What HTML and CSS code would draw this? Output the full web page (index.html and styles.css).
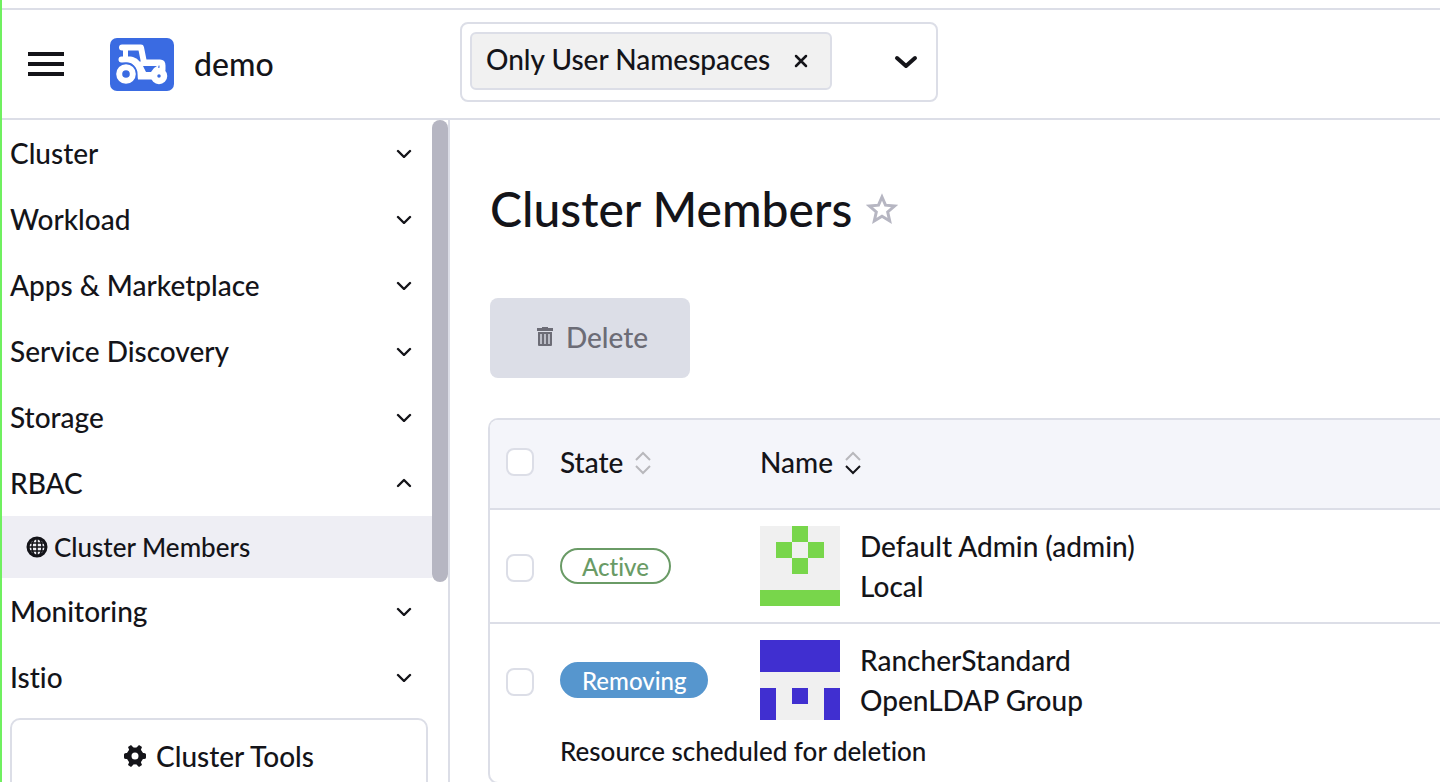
FILE: index.html
```html
<!DOCTYPE html>
<html lang="en">
<head>
    <meta charset="UTF-8">
    <meta name="viewport" content="width=device-width, initial-scale=1.0">
    <title>demo - Cluster Members</title>
    <link rel="stylesheet" href="styles.css">
</head>
<body>
    <!-- Shared icons -->
    <svg class="sprite" aria-hidden="true">
        <symbol id="chevron-down" viewBox="0 0 16 10">
            <path d="M2 3l6 6 6-6" fill="none" stroke="currentColor" stroke-width="2.400" stroke-linecap="round" stroke-linejoin="round"/>
        </symbol>
        <symbol id="chevron-up" viewBox="0 0 16 10">
            <path d="M2 8l6-6 6 6" fill="none" stroke="currentColor" stroke-width="2.400" stroke-linecap="round" stroke-linejoin="round"/>
        </symbol>
    </svg>

    <header class="header">
        <button class="menu-btn" type="button" aria-label="Menu">
            <svg width="36" height="24" viewBox="0 0 36 24"><path d="M0 0h36v4H0zM0 10h36v4H0zM0 20h36v4H0z" fill="currentColor"/></svg>
        </button>
        <a class="brand" href="#">
            <svg class="logo" width="64" height="53" viewBox="0 0 64 53" aria-hidden="true">
                <rect width="64" height="53" rx="7" fill="#3a6be2"/>
                <path d="M12 9.500h19l3 15h16q2.500 0 2.500 3v4" fill="none" stroke="#fff" stroke-width="6" stroke-linecap="round" stroke-linejoin="round"/>
                <path d="M13 10h5v10h-5z" fill="#fff"/>
                <path d="M11.500 18.500h7c5 0 9 2 11 5h20l-4 18H28c-1-11-4-17-11-17h-5.500a3 3 0 0 1 0-6z" fill="#fff"/>
                <path d="M33 28h14l-3 2-3 4h-5z" fill="#3a6be2"/>
                <circle cx="16" cy="36" r="11.500" fill="#3a6be2"/>
                <circle cx="16" cy="36" r="6.800" fill="none" stroke="#fff" stroke-width="6"/>
                <circle cx="49" cy="38" r="5" fill="none" stroke="#fff" stroke-width="6.500"/>
            </svg>
            <span>demo</span>
        </a>
        <div class="ns-filter">
            <div class="ns-tag">
                <span>Only User Namespaces</span>
                <button type="button" aria-label="Remove">
                    <svg width="14" height="14" viewBox="0 0 14 14"><path d="M2 2l10 10M12 2L2 12" stroke="currentColor" stroke-width="2.500" stroke-linecap="round"/></svg>
                </button>
            </div>
            <button class="ns-toggle" type="button" aria-label="Select namespaces">
                <svg width="24" height="14" viewBox="0 0 24 14"><path d="M3 3l9 8 9-8" fill="none" stroke="currentColor" stroke-width="4" stroke-linecap="round" stroke-linejoin="round"/></svg>
            </button>
        </div>
    </header>

    <div class="layout">
        <div class="sidebar">
            <nav class="nav">
                <button class="nav-group" type="button">Cluster <svg class="chevron"><use href="#chevron-down"/></svg></button>
                <button class="nav-group" type="button">Workload <svg class="chevron"><use href="#chevron-down"/></svg></button>
                <button class="nav-group" type="button">Apps &amp; Marketplace <svg class="chevron"><use href="#chevron-down"/></svg></button>
                <button class="nav-group" type="button">Service Discovery <svg class="chevron"><use href="#chevron-down"/></svg></button>
                <button class="nav-group" type="button">Storage <svg class="chevron"><use href="#chevron-down"/></svg></button>
                <button class="nav-group" type="button" aria-expanded="true">RBAC <svg class="chevron"><use href="#chevron-up"/></svg></button>
                <a class="nav-item" href="#">
                    <svg width="22" height="22" viewBox="0 0 22 22" fill="none" stroke="currentColor" aria-hidden="true">
                        <circle cx="11" cy="11" r="9" stroke-width="3"/>
                        <ellipse cx="11" cy="11" rx="5" ry="9" stroke-width="1.600"/>
                        <path d="M11 2v18M2 11h18M3 7h16M3 15h16" stroke-width="1.600"/>
                    </svg>
                    Cluster Members
                </a>
                <button class="nav-group" type="button">Monitoring <svg class="chevron"><use href="#chevron-down"/></svg></button>
                <button class="nav-group" type="button">Istio <svg class="chevron"><use href="#chevron-down"/></svg></button>
                <a class="tools-btn" href="#">
                    <svg width="22" height="22" viewBox="0 0 22 22" aria-hidden="true">
                        <circle cx="11" cy="11" r="6" fill="none" stroke="currentColor" stroke-width="5"/>
                        <path d="M2 8Q0 8 0 9.500v3Q0 14 2 14h4V8zM20 8q2 0 2 1.500v3q0 1.500-2 1.500h-4V8zM4 2l3-2 3 3-4 4zM18 2l-3-2-3 3 4 4zM4 20l3 2 3-3-4-4zM18 20l-3 2-3-3 4-4z" fill="currentColor"/>
                    </svg>
                    Cluster Tools
                </a>
            </nav>
            <div class="scroll-thumb"></div>
        </div>

        <main class="main">
            <div class="title">
                <h1>Cluster Members</h1>
                <button class="star" type="button" aria-label="Favorite">
                    <svg width="32" height="32" viewBox="0 0 32 32"><path d="M16 4l3.500 8.200 9 .8-6.800 6 2 9L16 23.300 8.300 28l2-9-6.800-6 9-.8z" fill="none" stroke="currentColor" stroke-width="3"/></svg>
                </button>
            </div>

            <button class="delete-btn" type="button" disabled>
                <svg width="18" height="20" viewBox="0 0 18 20" aria-hidden="true">
                    <path d="M1 1h5V0h6v1h5v3H1zM2 5h14v13q0 1-1 1H3q-1 0-1-1z" fill="currentColor"/>
                    <path d="M5 7v10M9 7v10M13 7v10" stroke="#dcdee7" stroke-width="1.400"/>
                </svg>
                Delete
            </button>

            <table class="members">
                <colgroup>
                    <col class="col-check">
                    <col class="col-state">
                    <col>
                </colgroup>
                <thead>
                    <tr>
                        <th><input type="checkbox" aria-label="Select all"></th>
                        <th>
                            <button class="sort" type="button">State
                                <svg width="18" height="26" viewBox="0 0 18 26"><path class="off" d="M2 11l7-7 7 7"/><path class="off" d="M2 17l7 7 7-7"/></svg>
                            </button>
                        </th>
                        <th>
                            <button class="sort" type="button">Name
                                <svg width="18" height="26" viewBox="0 0 18 26"><path class="off" d="M2 11l7-7 7 7"/><path class="on" d="M2 17l7 7 7-7"/></svg>
                            </button>
                        </th>
                    </tr>
                </thead>
                <tbody>
                    <tr>
                        <td><input type="checkbox" aria-label="Select Default Admin"></td>
                        <td><span class="badge active">Active</span></td>
                        <td>
                            <div class="principal">
                                <svg width="80" height="80" viewBox="0 0 5 5" shape-rendering="crispEdges" aria-hidden="true">
                                    <path d="M0 0h5v5H0z" fill="#f0f0f0"/>
                                    <path d="M2 0h1v1H2zM1 1h1v1H1zM3 1h1v1H3zM2 2h1v1H2zM0 4h5v1H0z" fill="#78d64b"/>
                                </svg>
                                <div>Default Admin (admin)<br>Local</div>
                            </div>
                        </td>
                    </tr>
                    <tr class="with-message">
                        <td><input type="checkbox" aria-label="Select RancherStandard"></td>
                        <td><span class="badge removing">Removing</span></td>
                        <td>
                            <div class="principal">
                                <svg width="80" height="80" viewBox="0 0 5 5" shape-rendering="crispEdges" aria-hidden="true">
                                    <path d="M0 0h5v5H0z" fill="#f0f0f0"/>
                                    <path d="M0 0h5v2H0zM0 3h1v2H0zM2 3h1v1H2zM4 3h1v2H4z" fill="#402fd0"/>
                                </svg>
                                <div>RancherStandard<br>OpenLDAP Group</div>
                            </div>
                        </td>
                    </tr>
                    <tr class="message">
                        <td></td>
                        <td colspan="2">Resource scheduled for deletion</td>
                    </tr>
                </tbody>
            </table>
        </main>
    </div>
</body>
</html>
```
FILE: styles.css
```css
* {
    box-sizing: border-box;
}
body {
    margin: 0;
    height: 100vh;
    padding-top: 8px;
    overflow: hidden;
    display: flex;
    flex-direction: column;
    border-left: 2px solid #70f060;
    background: #fff;
    color: #141419;
    font-family: Lato, sans-serif;
    font-size: 28px;
    font-weight: 500;
    font-variant-ligatures: none;
}
button {
    padding: 0;
    border: none;
    background: none;
    color: inherit;
    font: inherit;
    font-variant-ligatures: none;
}
a {
    color: inherit;
    text-decoration: none;
}
svg {
    display: block;
    flex-shrink: 0;
}
.sprite {
    position: absolute;
    width: 0;
    height: 0;
}

/* Header */
.header {
    display: flex;
    align-items: center;
    flex-shrink: 0;
    height: 112px;
    padding-left: 26px;
    border-top: 2px solid #dcdee7;
    border-bottom: 2px solid #dcdee7;
}
.brand {
    display: flex;
    align-items: center;
    gap: 20px;
    width: 350px;
    margin-left: 46px;
    font-size: 32px;
}
.brand span {
    padding-bottom: 2px;
}
.ns-filter {
    display: flex;
    align-items: center;
    justify-content: space-between;
    width: 478px;
    height: 80px;
    margin-bottom: 4px;
    padding: 0 18px 0 8px;
    border: 2px solid #dcdee7;
    border-radius: 8px;
}
.ns-tag {
    display: flex;
    align-items: center;
    gap: 24px;
    height: 58px;
    margin-bottom: 2px;
    padding: 0 22px 0 14px;
    border: 2px solid #dcdee7;
    border-radius: 6px;
    background: #f1f1f1;
}
.ns-tag span {
    padding-bottom: 4px;
}

/* Side navigation */
.layout {
    display: flex;
    flex: 1;
    min-height: 0;
}
.sidebar {
    display: flex;
    flex-shrink: 0;
    width: 448px;
    border-right: 2px solid #dcdee7;
}
.nav {
    display: flex;
    flex-direction: column;
    flex: 1;
}
.nav-group {
    display: flex;
    align-items: center;
    justify-content: space-between;
    flex-shrink: 0;
    height: 66px;
    padding: 0 20px 0 8px;
    text-align: left;
}
.chevron {
    width: 16px;
    height: 10px;
}
.nav-item {
    display: flex;
    align-items: center;
    flex-shrink: 0;
    gap: 6px;
    height: 62px;
    padding-left: 24px;
    background: #eeeef4;
    font-size: 26px;
}
.tools-btn {
    display: flex;
    align-items: center;
    justify-content: center;
    flex-shrink: 0;
    gap: 10px;
    height: 80px;
    margin: 8px 4px 0 8px;
    padding-bottom: 4px;
    border: 2px solid #dcdee7;
    border-radius: 10px;
}
.scroll-thumb {
    width: 16px;
    height: 462px;
    border-radius: 8px;
    background: #b6b6c2;
}

/* Content */
.main {
    flex: 1;
    min-width: 0;
    padding: 60px 0 0 40px;
}
.title {
    display: flex;
    align-items: center;
    gap: 14px;
}
h1 {
    margin: 0;
    font-size: 48px;
    font-weight: 500;
    line-height: 58px;
}
.star {
    color: #b6b6c2;
}
.delete-btn {
    display: flex;
    align-items: center;
    justify-content: center;
    gap: 12px;
    width: 200px;
    height: 80px;
    margin: 60px 0 40px;
    padding: 0 0 2px 4px;
    border-radius: 8px;
    background: #dcdee7;
    color: #6c6c76;
}

/* Members table */
.members {
    width: calc(100% + 2px);
    margin-left: -2px;
    table-layout: fixed;
    border: 2px solid #dcdee7;
    border-right: none;
    border-radius: 10px 0 0 10px;
    border-spacing: 0;
    overflow: hidden;
}
.col-check {
    width: 70px;
}
.col-state {
    width: 200px;
}
.members th,
.members td {
    padding: 0;
    text-align: left;
    font-weight: 500;
}
.members th {
    height: 90px;
    padding-bottom: 4px;
    border-bottom: 2px solid #dcdee7;
    background: #f4f5fa;
}
.members tbody td {
    height: 114px;
    border-bottom: 2px solid #dcdee7;
}
.members tbody .with-message td {
    border-bottom: none;
    height: 112px;
}
.members tbody .message td {
    height: 46px;
    padding-bottom: 16px;
    border-bottom: none;
    font-size: 26px;
    line-height: 30px;
}
.members input {
    appearance: none;
    display: block;
    width: 28px;
    height: 28px;
    margin: 0 0 0 16px;
    border: 2px solid #dcdee7;
    border-radius: 8px;
    background: #fff;
}
.members td input {
    margin-top: 4px;
}
.sort {
    display: flex;
    align-items: center;
    gap: 11px;
    line-height: 32px;
}
.sort path {
    fill: none;
    stroke-width: 2;
}
.off {
    stroke: #b8b8bc;
}
.on {
    stroke: #141419;
}
.badge {
    display: block;
    width: fit-content;
    height: 36px;
    padding: 0 20px;
    border: 2px solid;
    border-radius: 18px;
    font-size: 24px;
    line-height: 34px;
}
.badge.active {
    border-color: #6a9b66;
    color: #6a9b66;
}
.badge.removing {
    border-color: #5696ce;
    background: #5696ce;
    color: #fff;
}
.principal {
    display: flex;
    gap: 20px;
    line-height: 40px;
}
```
